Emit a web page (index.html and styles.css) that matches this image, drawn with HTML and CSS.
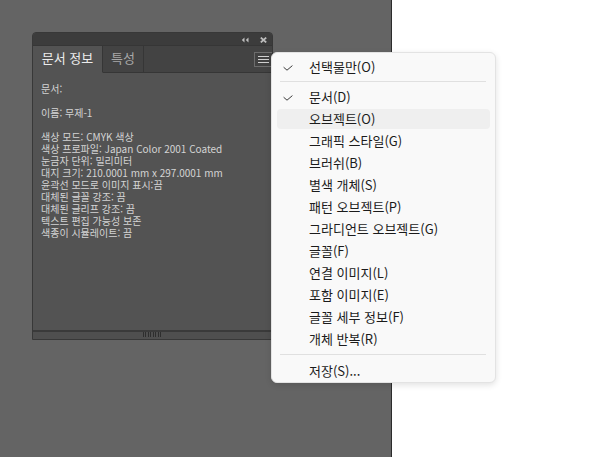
FILE: index.html
```html
<!DOCTYPE html>
<html lang="ko">
<head>
<meta charset="utf-8">
<title>문서 정보</title>
<link rel="stylesheet" href="styles.css">
</head>
<body>
<div class="canvas">
  <div class="panel">
    <div class="titlebar">
      <svg class="ico" width="8" height="6" viewBox="0 0 8 6"><path d="M3.5 0.5 L0.8 3 L3.5 5.5 Z M7.5 0.5 L4.8 3 L7.5 5.5 Z" fill="#bdbdbd"/></svg>
      <svg class="ico close" width="7" height="6" viewBox="0 0 7 6"><path d="M0.8 0.6 L6.2 5.4 M6.2 0.6 L0.8 5.4" stroke="#bdbdbd" stroke-width="1.8"/></svg>
    </div>
    <div class="tabs">
      <div class="tab active">문서 정보</div>
      <div class="tab">특성</div>
      <div class="tabfill">
        <div class="menubtn"><span></span><span></span><span></span></div>
      </div>
    </div>
    <div class="content">
      <div>문서:</div>
      <div class="blank"></div>
      <div>이름: 무제-1</div>
      <div class="blank"></div>
      <div>색상 모드: CMYK 색상</div>
      <div>색상 프로파일: Japan Color 2001 Coated</div>
      <div>눈금자 단위: 밀리미터</div>
      <div>대지 크기: 210.0001 mm x 297.0001 mm</div>
      <div>윤곽선 모드로 이미지 표시:끔</div>
      <div>대체된 글꼴 강조: 끔</div>
      <div>대체된 글리프 강조: 끔</div>
      <div>텍스트 편집 가능성 보존</div>
      <div>색종이 시뮬레이트: 끔</div>
    </div>
    <div class="statusbar"><span class="grip"></span></div>
  </div>
</div>
<div class="paper"></div>

<div class="menu">
  <div class="item"><span class="check"><svg width="10" height="6" viewBox="0 0 10 6"><path d="M0.6 2.2 L4 5.2 L9.4 0.6" fill="none" stroke="#3a3a3a" stroke-width="1"/></svg></span>선택물만(O)</div>
  <div class="sep"></div>
  <div class="item"><span class="check"><svg width="10" height="6" viewBox="0 0 10 6"><path d="M0.6 2.2 L4 5.2 L9.4 0.6" fill="none" stroke="#3a3a3a" stroke-width="1"/></svg></span>문서(D)</div>
  <div class="item hover"><span class="check"></span>오브젝트(O)</div>
  <div class="item"><span class="check"></span>그래픽 스타일(G)</div>
  <div class="item"><span class="check"></span>브러쉬(B)</div>
  <div class="item"><span class="check"></span>별색 개체(S)</div>
  <div class="item"><span class="check"></span>패턴 오브젝트(P)</div>
  <div class="item"><span class="check"></span>그라디언트 오브젝트(G)</div>
  <div class="item"><span class="check"></span>글꼴(F)</div>
  <div class="item"><span class="check"></span>연결 이미지(L)</div>
  <div class="item"><span class="check"></span>포함 이미지(E)</div>
  <div class="item"><span class="check"></span>글꼴 세부 정보(F)</div>
  <div class="item"><span class="check"></span>개체 반복(R)</div>
  <div class="sep bottom"></div>
  <div class="item"><span class="check"></span>저장(S)...</div>
</div>
</body>
</html>
```

FILE: styles.css
```css
* { box-sizing: border-box; }
html, body { margin: 0; padding: 0; }
body {
  width: 589px;
  height: 457px;
  display: flex;
  overflow: hidden;
  font-family: "Noto Sans CJK KR", "Noto Sans", sans-serif;
  position: relative;
}
.canvas {
  width: 392px;
  height: 457px;
  background: #646464;
  border-right: 1px solid #2c2c2c;
  position: relative;
}
.paper { flex: 1; background: #ffffff; }

.panel {
  position: absolute;
  left: 32px;
  top: 32px;
  width: 241px;
  height: 308px;
  border: 1px solid #383838;
  border-radius: 4px 4px 0 0;
  display: flex;
  flex-direction: column;
  background: #535353;
  overflow: hidden;
}
.titlebar {
  height: 12px;
  background: #3c3c3c;
  display: flex;
  justify-content: flex-end;
  align-items: center;
  gap: 11px;
  padding-right: 5px;
  padding-top: 1px;
}
.ico { display: block; }
.tabs {
  height: 28px;
  display: flex;
  background: #434343;
  border-top: 1px solid #363636;
}
.tab {
  font-size: 13px;
  color: #a8a8a8;
  padding: 2px 0 0 0;
  line-height: 20px;
  text-align: center;
  border-right: 1px solid #363636;
  border-bottom: 1px solid #363636;
  width: 41px;
}
.tab.active {
  width: 70px;
  background: #535353;
  color: #ececec;
  border-bottom-color: #535353;
}
.tabfill {
  flex: 1;
  border-bottom: 1px solid #363636;
  display: flex;
  justify-content: flex-end;
  padding-top: 6px;
}
.menubtn {
  width: 20px;
  height: 15px;
  border: 1px solid #6c6c6c;
  background: #414141;
  display: flex;
  flex-direction: column;
  gap: 2px;
  padding: 3px 0 0 3px;
  margin-right: -2px;
}
.menubtn span {
  display: block;
  width: 11px;
  height: 1px;
  background: #cfcfcf;
}
.content {
  flex: 1;
  padding: 10px 8px 8px;
  font-size: 10px;
  line-height: 12px;
  color: #d4d4d4;
}
.blank { height: 12px; }
.statusbar {
  height: 9px;
  border-top: 2px solid #3a3a3a;
  background: #4f4f4f;
  display: flex;
  justify-content: center;
}
.grip {
  width: 20px;
  height: 5px;
  background: repeating-linear-gradient(90deg, #2e2e2e 0 1px, transparent 1px 2.5px);
}

.menu {
  position: absolute;
  left: 271px;
  top: 52px;
  width: 225px;
  background: #f9f9f9;
  border: 1px solid #e3e3e3;
  border-radius: 6px;
  box-shadow: 0 2px 6px rgba(0,0,0,0.12);
  padding: 3px 5px 0 5px;
  font-size: 13px;
  color: #1b1b1b;
  display: flex;
  flex-direction: column;
}
.item {
  height: 20px;
  margin: 1px 0;
  line-height: 20px;
  display: flex;
  align-items: center;
  border-radius: 4px;
  white-space: nowrap;
}
.item.hover { background: #efefef; }
.check {
  width: 32px;
  flex: none;
  display: flex;
  align-items: center;
  padding-left: 6px;
  padding-top: 1px;
}
.check svg { display: block; }
.sep {
  height: 1px;
  flex: none;
  background: #e0e0e0;
  margin: 3px 4px 4px 3px;
}
.sep.bottom { margin: 4px 4px 5px 3px; }
```
